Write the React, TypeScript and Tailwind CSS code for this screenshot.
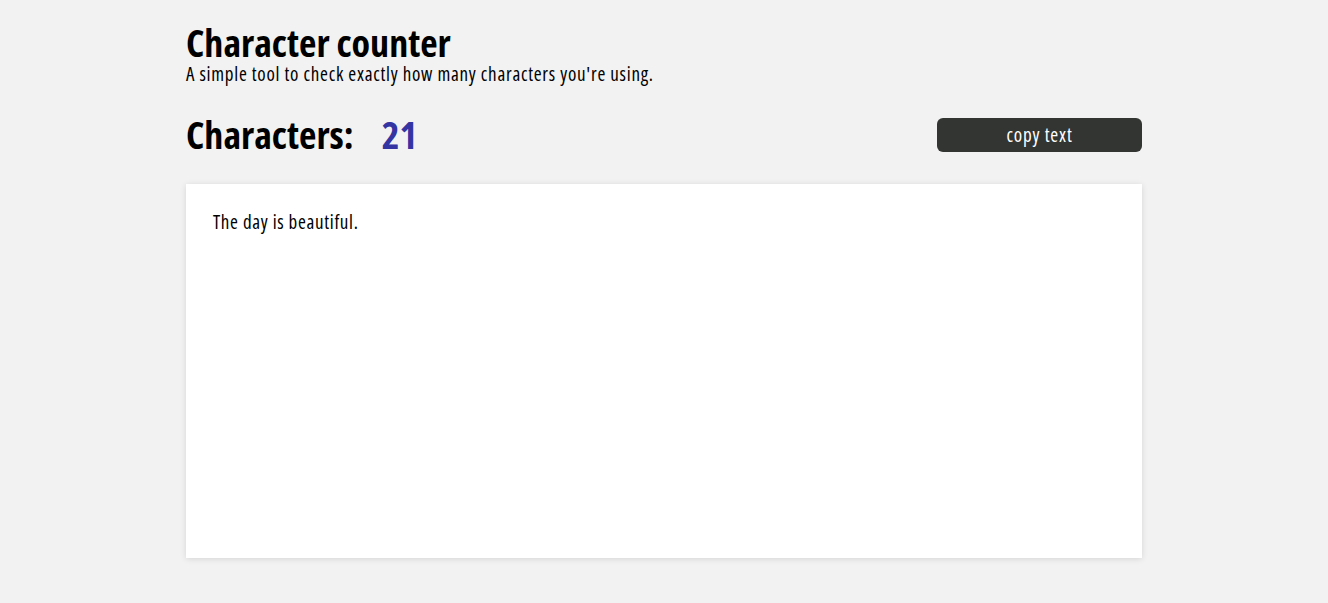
import React, { useState } from "react";

export default function App() {
  const [text, setText] = useState("The day is beautiful.");
  return (
    <div className="min-h-[603px] w-full bg-[#f2f2f2] font-['Open_Sans',sans-serif] font-stretch-condensed">
      <div className="mx-auto w-[956px] pt-[21px]">
        <h1 className="text-[38px] font-bold leading-[42px] text-black">Character counter</h1>
        <p className="text-[19px] leading-[22px] tracking-[0.75px] text-black">A simple tool to check exactly how many characters you're using.</p>
        <div className="mt-[27px] flex items-center justify-between">
          <div className="flex items-center text-[38px] font-bold leading-[44px]">
            <span className="text-black">Characters:</span>
            <span className="ml-[28px] text-[#3434a3]">{text.length}</span>
          </div>
          <button className="mt-[2px] h-[34px] w-[205px] rounded-[6px] bg-[#333533] text-[19px] tracking-[0.85px] text-white font-stretch-condensed">copy text</button>
        </div>
        <div className="mt-[28px] h-[374px] bg-white shadow-[0_1px_6px_rgba(0,0,0,0.12)]">
          <textarea
            value={text}
            onChange={(e) => setText(e.target.value)}
            className="h-full w-full resize-none bg-transparent px-[27px] py-[27px] font-['Open_Sans',sans-serif] text-[19px] leading-[22px] tracking-[0.7px] text-black outline-none font-stretch-condensed"
          />
        </div>
      </div>
    </div>
  );
}
